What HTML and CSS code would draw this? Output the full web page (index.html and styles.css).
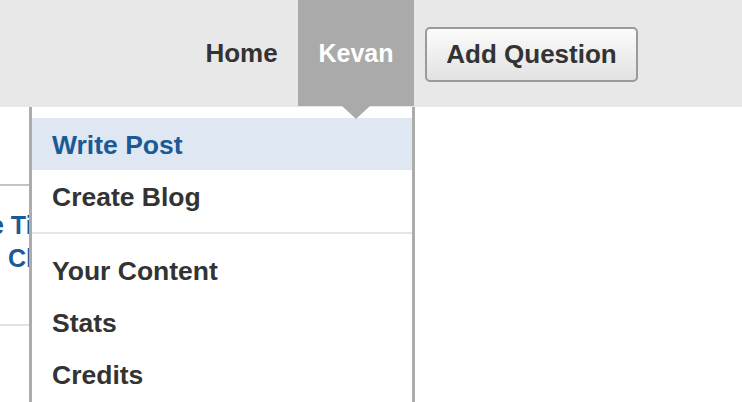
FILE: index.html
```html
<!DOCTYPE html>
<html>
<head>
<meta charset="utf-8">
<link rel="stylesheet" href="styles.css">
</head>
<body>
<header class="topbar">
  <nav class="nav">
    <a class="nav-item home">Home</a>
    <a class="nav-item user">Kevan<span class="caret"></span></a>
    <button class="add-btn">Add Question</button>
  </nav>
</header>
<main class="feed">
  <div class="story">
    <div class="story-title">e Ti</div>
    <div class="story-sub">Cl</div>
  </div>
</main>
<div class="dropdown">
  <div class="menu-item active">Write Post</div>
  <div class="menu-item">Create Blog</div>
  <div class="sep"></div>
  <div class="menu-item">Your Content</div>
  <div class="menu-item">Stats</div>
  <div class="menu-item">Credits</div>
</div>
</body>
</html>
```
FILE: styles.css
```css
html, body {
  margin: 0;
  padding: 0;
  background: #fff;
  font-family: "Liberation Sans", Arial, Helvetica, sans-serif;
  font-weight: bold;
  font-size: 26px;
  color: #333;
  overflow: hidden;
  height: 402px;
}
.topbar {
  height: 107px;
  background: #e8e8e8;
}
.nav {
  display: flex;
  align-items: center;
  height: 107px;
  padding-left: 185px;
}
.nav-item {
  display: flex;
  align-items: center;
  justify-content: center;
  height: 106px;
  align-self: flex-start;
  padding-top: 1px;
  box-sizing: border-box;
}
.home {
  width: 113px;
  color: #333;
}
.user {
  position: relative;
  width: 116px;
  background: #aaaaaa;
  color: #fff;
  font-size: 25px;
}
.caret {
  position: absolute;
  left: 44px;
  top: 106px;
  width: 0;
  height: 0;
  border-left: 14px solid transparent;
  border-right: 14px solid transparent;
  border-top: 13px solid #aaaaaa;
  z-index: 3;
}
.add-btn {
  margin-left: 11px;
  width: 213px;
  height: 55px;
  border: 2px solid #9a9a9a;
  border-radius: 5px;
  background: linear-gradient(#fbfbfb, #e2e2e2);
  font-family: inherit;
  font-weight: bold;
  font-size: 26px;
  color: #333;
  padding: 0;
  margin-top: 1px;
}
.feed {
  padding-top: 77px;
}
.story {
  width: 400px;
  border-top: 2px solid #c4c4c4;
  border-bottom: 2px solid #e2e2e2;
  height: 138px;
  color: #1a5a96;
  font-size: 25px;
}
.story-title {
  margin-top: 25px;
  padding-left: 0;
  text-indent: -10px;
  line-height: 28px;
  white-space: nowrap;
}
.story-sub {
  padding-left: 8px;
  margin-top: 5px;
  line-height: 28px;
}
.dropdown {
  position: absolute;
  left: 29px;
  top: 107px;
  width: 380px;
  height: 284px;
  background: #fff;
  border-left: 3px solid #acacac;
  border-right: 3px solid #acacac;
  padding-top: 11px;
  z-index: 2;
  font-size: 26.5px;
}
.menu-item {
  height: 52px;
  line-height: 54px;
  padding-left: 20px;
  color: #333;
}
.menu-item.active {
  background: #dfe8f2;
  color: #1a5a96;
}
.sep {
  height: 2px;
  background: #e6e6e6;
  margin: 10px 0 10px;
}
```
